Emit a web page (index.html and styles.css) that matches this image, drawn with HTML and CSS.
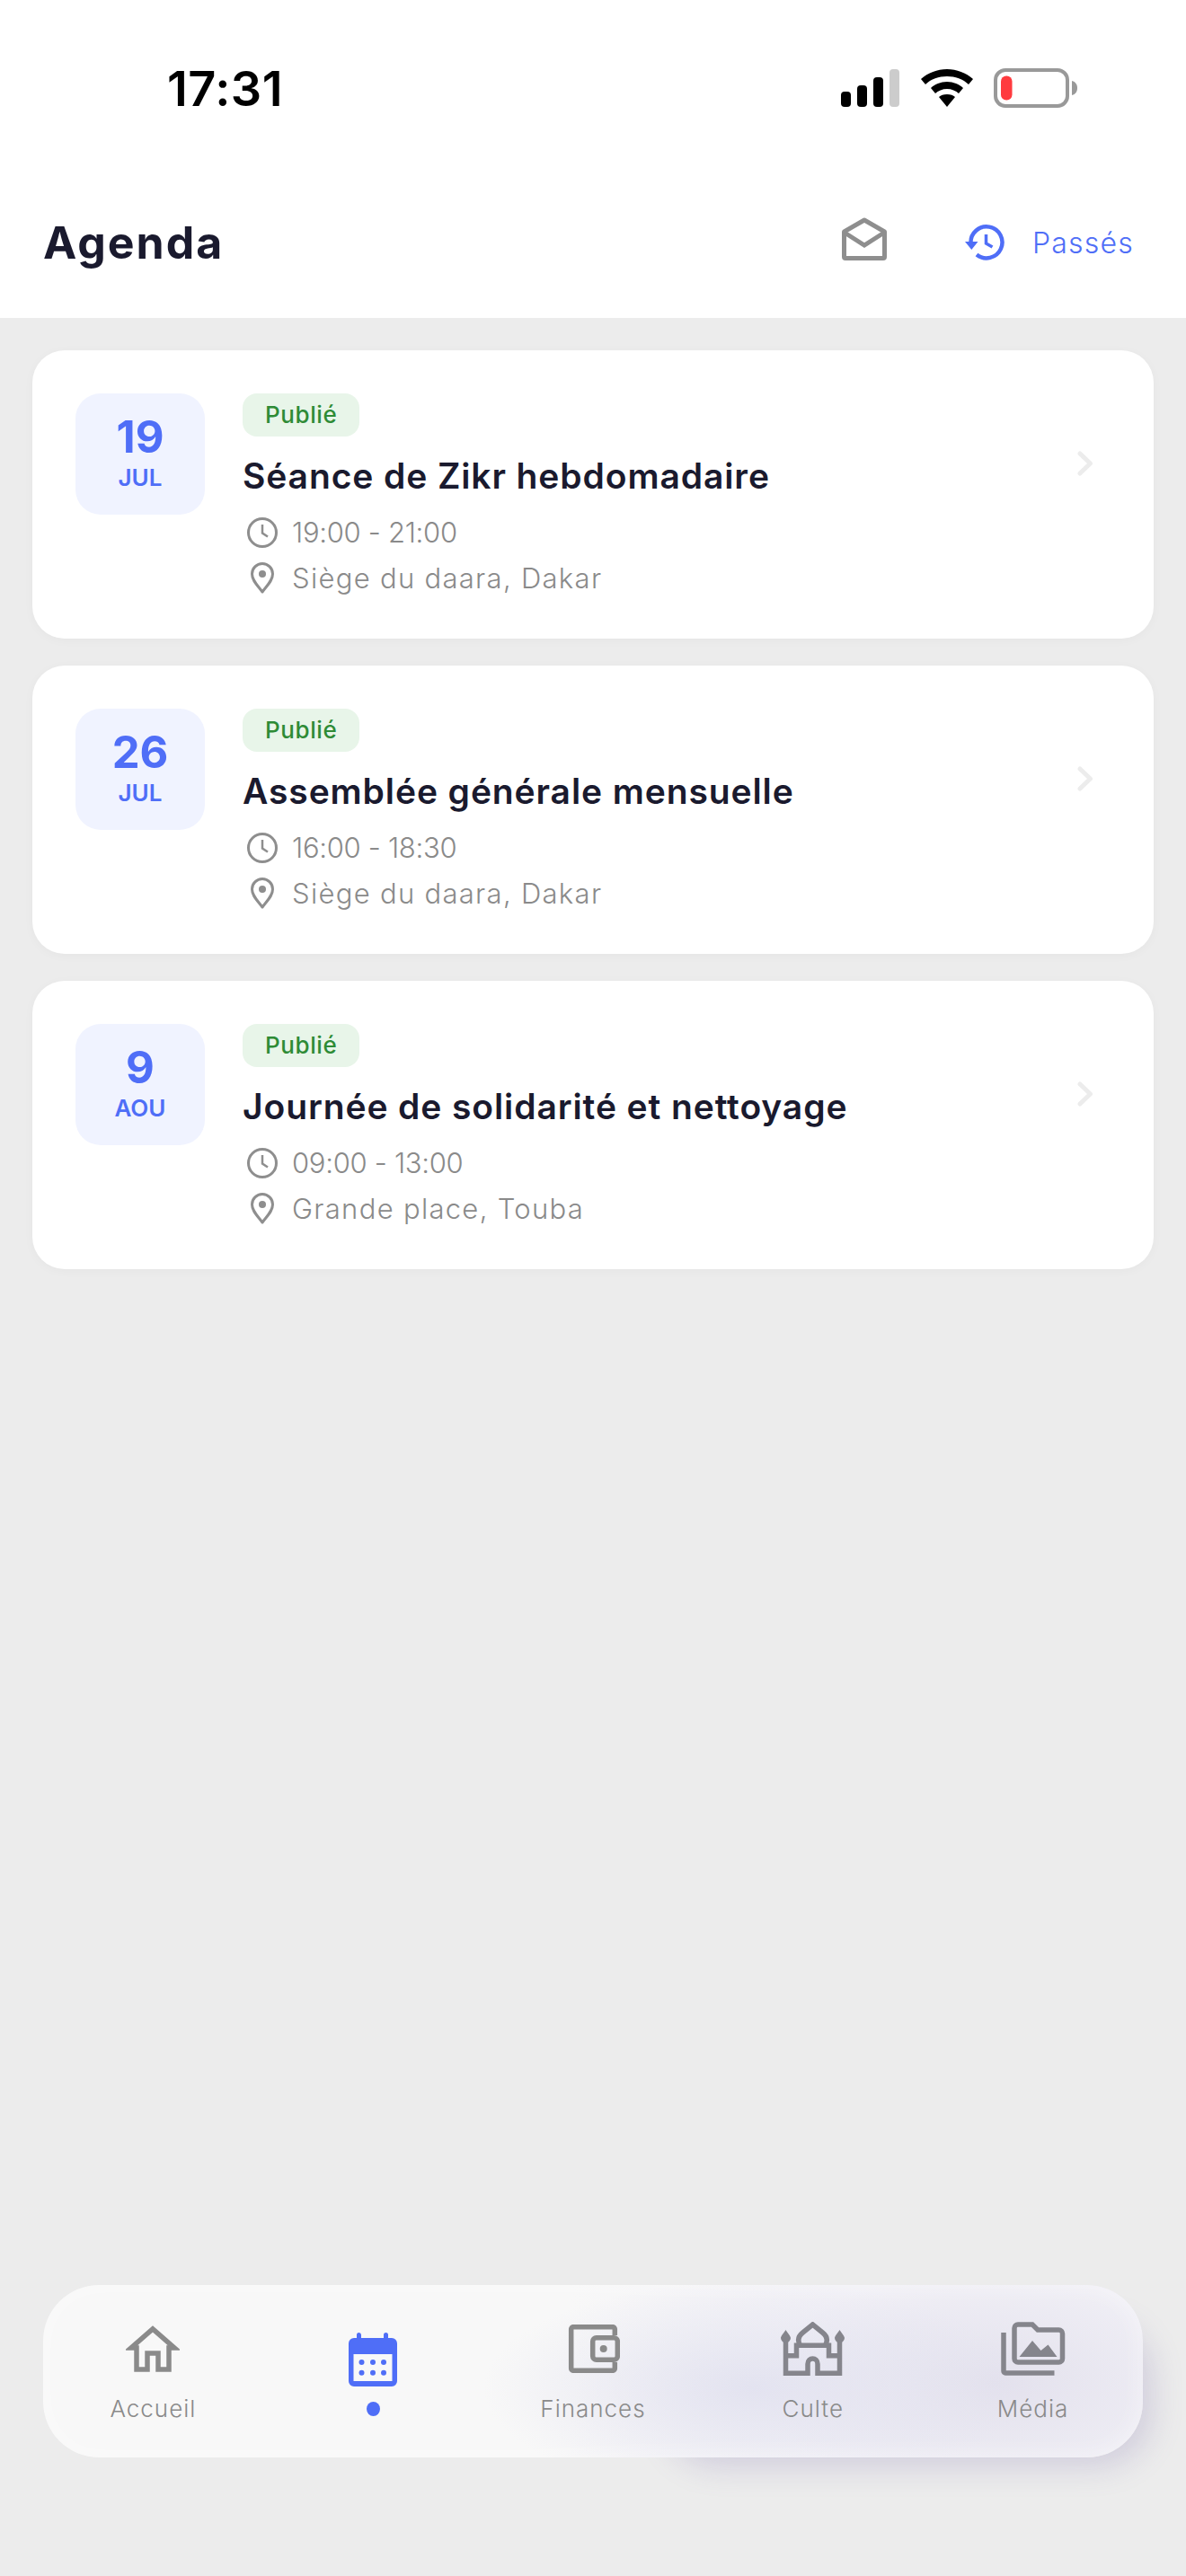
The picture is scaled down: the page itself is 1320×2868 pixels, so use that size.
FILE: index.html
```html
<!DOCTYPE html>
<html lang="fr">
<head>
    <meta charset="UTF-8">
    <meta name="viewport" content="width=device-width, initial-scale=1.0">
    <title>Agenda</title>
    <link rel="stylesheet" href="styles.css">
</head>
<body>
    <div class="screen">
        <!-- Status bar + header -->
        <header class="top">
            <div class="status-bar">
                <span class="clock">17:31</span>
                <div class="status-icons">
                    <svg class="signal" width="66" height="42" viewBox="0 0 66 42">
                        <rect x="0" y="25" width="11" height="17" rx="4" fill="#000"/>
                        <rect x="18" y="18" width="11" height="24" rx="4" fill="#000"/>
                        <rect x="36" y="9" width="11" height="33" rx="4" fill="#000"/>
                        <rect x="54" y="0" width="11" height="42" rx="4" fill="#ccc"/>
                    </svg>
                    <svg class="wifi" width="58" height="42" viewBox="0 0 58 42">
                        <path d="M29 0C18 0 8 4 0 11l5 6c6-6 15-9 24-9s18 3 24 9l5-6C50 4 40 0 29 0z" fill="#000"/>
                        <path d="M29 14c-7 0-14 3-18 7l5 6c3-3 8-5 13-5s10 2 13 5l5-6c-4-4-11-7-18-7z" fill="#000"/>
                        <path d="M29 28c-4 0-7 1-9 3l9 11 9-11c-2-2-5-3-9-3z" fill="#000"/>
                    </svg>
                    <svg class="battery" width="94" height="44" viewBox="0 0 94 44">
                        <rect x="2" y="2" width="80" height="40" rx="11" fill="none" stroke="#999" stroke-width="4"/>
                        <rect x="8" y="8.5" width="12.5" height="27" rx="6" fill="#ff3b3f"/>
                        <path d="M87 14c4 1 6 4 6 8s-2 7-6 8z" fill="#999"/>
                    </svg>
                </div>
            </div>
            <div class="app-bar">
                <h1>Agenda</h1>
                <div class="app-actions">
                    <svg class="mail-icon" width="50" height="48" viewBox="0 0 50 48">
                        <path d="M2.5 16 25 3 47.5 16V44a1.5 1.5 0 0 1-1.5 1.5H4A1.5 1.5 0 0 1 2.5 44z" fill="none" stroke="#8e8e8e" stroke-width="5" stroke-linejoin="round"/>
                        <path d="M3 17l22 14 22-14" fill="none" stroke="#8e8e8e" stroke-width="5"/>
                    </svg>
                    <a class="past-link">
                        <svg width="44" height="40" viewBox="0 0 44 40">
                            <path d="M6.5 21A17.5 17.5 0 1 1 13 33.5" fill="none" stroke="#4f6ef7" stroke-width="4.5"/>
                            <path d="M0 19h14.5L7.3 28z" fill="#4f6ef7"/>
                            <path d="M23.5 11v10l7 4" fill="none" stroke="#4f6ef7" stroke-width="3.5"/>
                        </svg>
                        <span>Passés</span>
                    </a>
                </div>
            </div>
        </header>

        <!-- Events -->
        <main class="event-list">
            <article class="event-card">
                <div class="date-box">
                    <span class="day">19</span>
                    <span class="month">JUL</span>
                </div>
                <div class="event-body">
                    <span class="badge">Publié</span>
                    <h2>Séance de Zikr hebdomadaire</h2>
                    <div class="meta meta-time">
                        <svg class="meta-icon" width="36" height="36" viewBox="0 0 36 36"><circle cx="18" cy="18" r="15.5" fill="none" stroke="#8e8e8e" stroke-width="3"/><path d="M18 9v9.5l6 4" fill="none" stroke="#8e8e8e" stroke-width="2.5"/></svg>
                        <span>19:00 - 21:00</span>
                    </div>
                    <div class="meta">
                        <svg class="meta-icon" width="36" height="36" viewBox="0 0 36 36"><path d="M18 33C12 25 6.5 20 6.5 13a11.5 11.5 0 0 1 23 0C29.5 20 24 25 18 33z" fill="none" stroke="#8e8e8e" stroke-width="3" stroke-linejoin="round"/><circle cx="18" cy="13" r="4" fill="#8e8e8e"/></svg>
                        <span>Siège du daara, Dakar</span>
                    </div>
                </div>
                <svg class="chevron" width="20" height="30" viewBox="0 0 20 30"><path d="M3 4l11.5 11L3 26" fill="none" stroke="#ececec" stroke-width="5" stroke-linecap="round" stroke-linejoin="round"/></svg>
            </article>

            <article class="event-card">
                <div class="date-box">
                    <span class="day">26</span>
                    <span class="month">JUL</span>
                </div>
                <div class="event-body">
                    <span class="badge">Publié</span>
                    <h2>Assemblée générale mensuelle</h2>
                    <div class="meta meta-time">
                        <svg class="meta-icon" width="36" height="36" viewBox="0 0 36 36"><circle cx="18" cy="18" r="15.5" fill="none" stroke="#8e8e8e" stroke-width="3"/><path d="M18 9v9.5l6 4" fill="none" stroke="#8e8e8e" stroke-width="2.5"/></svg>
                        <span>16:00 - 18:30</span>
                    </div>
                    <div class="meta">
                        <svg class="meta-icon" width="36" height="36" viewBox="0 0 36 36"><path d="M18 33C12 25 6.5 20 6.5 13a11.5 11.5 0 0 1 23 0C29.5 20 24 25 18 33z" fill="none" stroke="#8e8e8e" stroke-width="3" stroke-linejoin="round"/><circle cx="18" cy="13" r="4" fill="#8e8e8e"/></svg>
                        <span>Siège du daara, Dakar</span>
                    </div>
                </div>
                <svg class="chevron" width="20" height="30" viewBox="0 0 20 30"><path d="M3 4l11.5 11L3 26" fill="none" stroke="#ececec" stroke-width="5" stroke-linecap="round" stroke-linejoin="round"/></svg>
            </article>

            <article class="event-card">
                <div class="date-box">
                    <span class="day">9</span>
                    <span class="month">AOU</span>
                </div>
                <div class="event-body">
                    <span class="badge">Publié</span>
                    <h2>Journée de solidarité et nettoyage</h2>
                    <div class="meta meta-time">
                        <svg class="meta-icon" width="36" height="36" viewBox="0 0 36 36"><circle cx="18" cy="18" r="15.5" fill="none" stroke="#8e8e8e" stroke-width="3"/><path d="M18 9v9.5l6 4" fill="none" stroke="#8e8e8e" stroke-width="2.5"/></svg>
                        <span>09:00 - 13:00</span>
                    </div>
                    <div class="meta">
                        <svg class="meta-icon" width="36" height="36" viewBox="0 0 36 36"><path d="M18 33C12 25 6.5 20 6.5 13a11.5 11.5 0 0 1 23 0C29.5 20 24 25 18 33z" fill="none" stroke="#8e8e8e" stroke-width="3" stroke-linejoin="round"/><circle cx="18" cy="13" r="4" fill="#8e8e8e"/></svg>
                        <span>Grande place, Touba</span>
                    </div>
                </div>
                <svg class="chevron" width="20" height="30" viewBox="0 0 20 30"><path d="M3 4l11.5 11L3 26" fill="none" stroke="#ececec" stroke-width="5" stroke-linecap="round" stroke-linejoin="round"/></svg>
            </article>
        </main>

        <!-- Bottom tabs -->
        <nav class="tab-bar">
            <div class="tab">
                <div class="tab-icon">
                    <svg width="60" height="54" viewBox="0 0 60 54">
                        <path d="M12 50V26H6L30 5l24 21h-6v24H36V32H24v18z" fill="none" stroke="#8a8a8a" stroke-width="5.5"/>
                    </svg>
                </div>
                <span>Accueil</span>
            </div>
            <div class="tab tab-active">
                <svg width="54" height="60" viewBox="0 0 54 60">
                    <path d="M9 2.5a2.5 2.5 0 0 1 5 0V6h25V2.5a2.5 2.5 0 0 1 5 0V6h4a6 6 0 0 1 6 6v42a6 6 0 0 1-6 6H6a6 6 0 0 1-6-6V12a6 6 0 0 1 6-6h3z" fill="#4f6ef7"/>
                    <rect x="5.5" y="24" width="43" height="30" fill="#f8f8f8"/>
                    <g fill="#4f6ef7">
                        <circle cx="14.5" cy="33" r="3"/><circle cx="27" cy="33" r="3"/><circle cx="39" cy="33" r="3"/>
                        <circle cx="14.5" cy="44.7" r="3"/><circle cx="27" cy="44.7" r="3"/><circle cx="39" cy="44.7" r="3"/>
                    </g>
                </svg>
                <i class="dot"></i>
            </div>
            <div class="tab">
                <div class="tab-icon">
                    <svg width="60" height="54" viewBox="0 0 60 54">
                        <path d="M54.3 12V5A2.3 2.3 0 0 0 52 2.700H8A2.3 2.3 0 0 0 5.700 5v44A2.3 2.3 0 0 0 8 51.300h44a2.3 2.3 0 0 0 2.3-2.3v-7" fill="none" stroke="#8a8a8a" stroke-width="5.5"/>
                        <rect x="29.7" y="14.7" width="27.6" height="24.6" rx="4" fill="none" stroke="#8a8a8a" stroke-width="5.5"/>
                        <circle cx="41.7" cy="27" r="4" fill="#8a8a8a"/>
                    </svg>
                </div>
                <span>Finances</span>
            </div>
            <div class="tab">
                <div class="tab-icon">
                    <svg width="71" height="60" viewBox="0 0 71 60">
                        <g fill="none" stroke="#85858c" stroke-width="5.5">
                            <path d="M5.5 20V60M65.5 20V60"/>
                            <path d="M5 57.3H30V47c0-8 11-8 11 0v10.3H66"/>
                            <path d="M5 37.7H17.5V26.3H53.5V37.7H66"/>
                            <path d="M21.5 26c-3-5-2-10 3-14l11-9 11 9c5 4 6 9 3 14"/>
                        </g>
                        <path d="M5.5 9c-2 3-5.5 7-5.5 9s2 5 5.5 6c3.5-1 5.5-4 5.5-6s-3.5-6-5.5-9zM65.5 9c-2 3-5.5 7-5.5 9s2 5 5.5 6c3.5-1 5.5-4 5.5-6s-3.5-6-5.5-9z" fill="#85858c"/>
                    </svg>
                </div>
                <span>Culte</span>
            </div>
            <div class="tab">
                <div class="tab-icon">
                    <svg width="72" height="60" viewBox="0 0 72 60">
                        <path d="M3 12v43a2 2 0 0 0 2 2h54.5" fill="none" stroke="#85858c" stroke-width="5.5"/>
                        <path d="M15 7a4 4 0 0 1 4-4h16l6 6h23.5a4 4 0 0 1 4 4v28a4 4 0 0 1-4 4H19a4 4 0 0 1-4-4z" fill="none" stroke="#85858c" stroke-width="5.5"/>
                        <path d="M20.5 39 35 21l9.5 11 8-6.5L62.5 39z" fill="#85858c"/>
                    </svg>
                </div>
                <span>Média</span>
            </div>
        </nav>
    </div>
</body>
</html>
```

FILE: styles.css
```css
/* General */
body {
    margin: 0;
    font-family: 'Inter', 'Noto Sans', sans-serif;
    background: #ececec;
    color: #1a1a2e;
}

.screen {
    width: 1320px;
    height: 2868px;
    display: flex;
    flex-direction: column;
    overflow: hidden;
}

/* Header */
.top {
    background: #fff;
    height: 354px;
    flex-shrink: 0;
}

.status-bar {
    display: flex;
    justify-content: space-between;
    align-items: center;
    height: 44px;
    padding: 76px 0 0 186px;
    margin-right: 120px;
}

.clock {
    font-size: 54px;
    font-weight: 600;
    letter-spacing: 0.5px;
    color: #000;
}

.status-icons {
    display: flex;
    align-items: center;
    gap: 23px;
}

.app-bar {
    display: flex;
    justify-content: space-between;
    align-items: center;
    height: 60px;
    padding: 120px 58px 0 48px;
}

.app-bar h1 {
    margin: 0;
    font-size: 50px;
    font-weight: 700;
    letter-spacing: 2px;
}

.app-actions {
    display: flex;
    align-items: center;
    gap: 87px;
}

.mail-icon {
    margin-bottom: 8px;
}

.past-link {
    display: flex;
    align-items: center;
    gap: 31px;
    color: #4f6ef7;
    font-size: 32px;
    font-weight: 300;
    letter-spacing: 1.2px;
}

/* Event cards */
.event-list {
    display: flex;
    flex-direction: column;
    gap: 30px;
    padding: 36px 36px 0;
    flex: 1;
}

.event-card {
    display: flex;
    height: 321px;
    box-sizing: border-box;
    padding: 48px 65px 0 48px;
    background: #fff;
    border-radius: 36px;
    box-shadow: 0 2px 12px rgba(0, 0, 0, 0.03);
}

.date-box {
    width: 144px;
    height: 135px;
    flex-shrink: 0;
    display: flex;
    flex-direction: column;
    align-items: center;
    justify-content: center;
    background: #f0f3ff;
    border-radius: 28px;
    color: #4f6ef7;
}

.day {
    font-size: 49px;
    font-weight: 700;
    line-height: 48px;
    margin-bottom: 4px;
}

.month {
    font-size: 26px;
    font-weight: 600;
    line-height: 34px;
}

.event-body {
    flex: 1;
    margin-left: 42px;
}

.badge {
    display: inline-block;
    height: 48px;
    line-height: 48px;
    padding: 0 25px;
    background: #e8f5e9;
    border-radius: 16px;
    color: #2e8b36;
    font-size: 26px;
    font-weight: 500;
    letter-spacing: 0.6px;
}

.event-body h2 {
    margin: 18px 0 11px;
    font-size: 39px;
    line-height: 52px;
    font-weight: 600;
    letter-spacing: 0.9px;
}

.meta {
    display: flex;
    align-items: center;
    gap: 15px;
    height: 51px;
    padding-left: 4px;
    color: #8a8a8a;
    font-size: 31px;
    font-weight: 300;
    letter-spacing: 1.3px;
}

.meta-time {
    letter-spacing: -0.3px;
}

.chevron {
    align-self: flex-start;
    margin-top: 63px;
}

/* Bottom tabs */
.tab-bar {
    display: grid;
    grid-template-columns: repeat(5, 1fr);
    box-sizing: border-box;
    width: 1224px;
    height: 192px;
    margin: 0 0 132px 48px;
    padding-top: 38px;
    border-radius: 62px;
    background:
        radial-gradient(ellipse 300px 120px at 790px 115px, #e3e3f0, rgba(227, 227, 240, 0) 100%),
        radial-gradient(ellipse 260px 130px at 1060px 110px, #e3e1ed, rgba(227, 225, 237, 0) 100%),
        linear-gradient(90deg, #f8f8f8 48%, #f1f0f6 72%, #f1f0f6 100%);
    box-shadow: inset 0 0 28px rgba(255, 255, 255, 0.45);
    position: relative;
}

/* lavender shadow only falls under the right part of the bar */
.tab-bar::before {
    content: '';
    position: absolute;
    top: 30px;
    right: 0;
    bottom: 0;
    left: 680px;
    border-radius: 62px;
    box-shadow: 10px 10px 34px rgba(120, 110, 170, 0.24);
    z-index: -1;
}

.tab {
    display: flex;
    flex-direction: column;
    align-items: center;
    color: #8a8a8a;
    font-size: 26px;
    font-weight: 300;
    letter-spacing: 1px;
    line-height: 30px;
}

.tab-icon {
    height: 66px;
    margin-bottom: 19px;
    display: flex;
    align-items: center;
    justify-content: center;
}

.tab-active svg {
    margin-top: 15px;
}

.dot {
    width: 15px;
    height: 16px;
    margin-top: 17px;
    background: #4f6ef7;
    border-radius: 50%;
}
```
